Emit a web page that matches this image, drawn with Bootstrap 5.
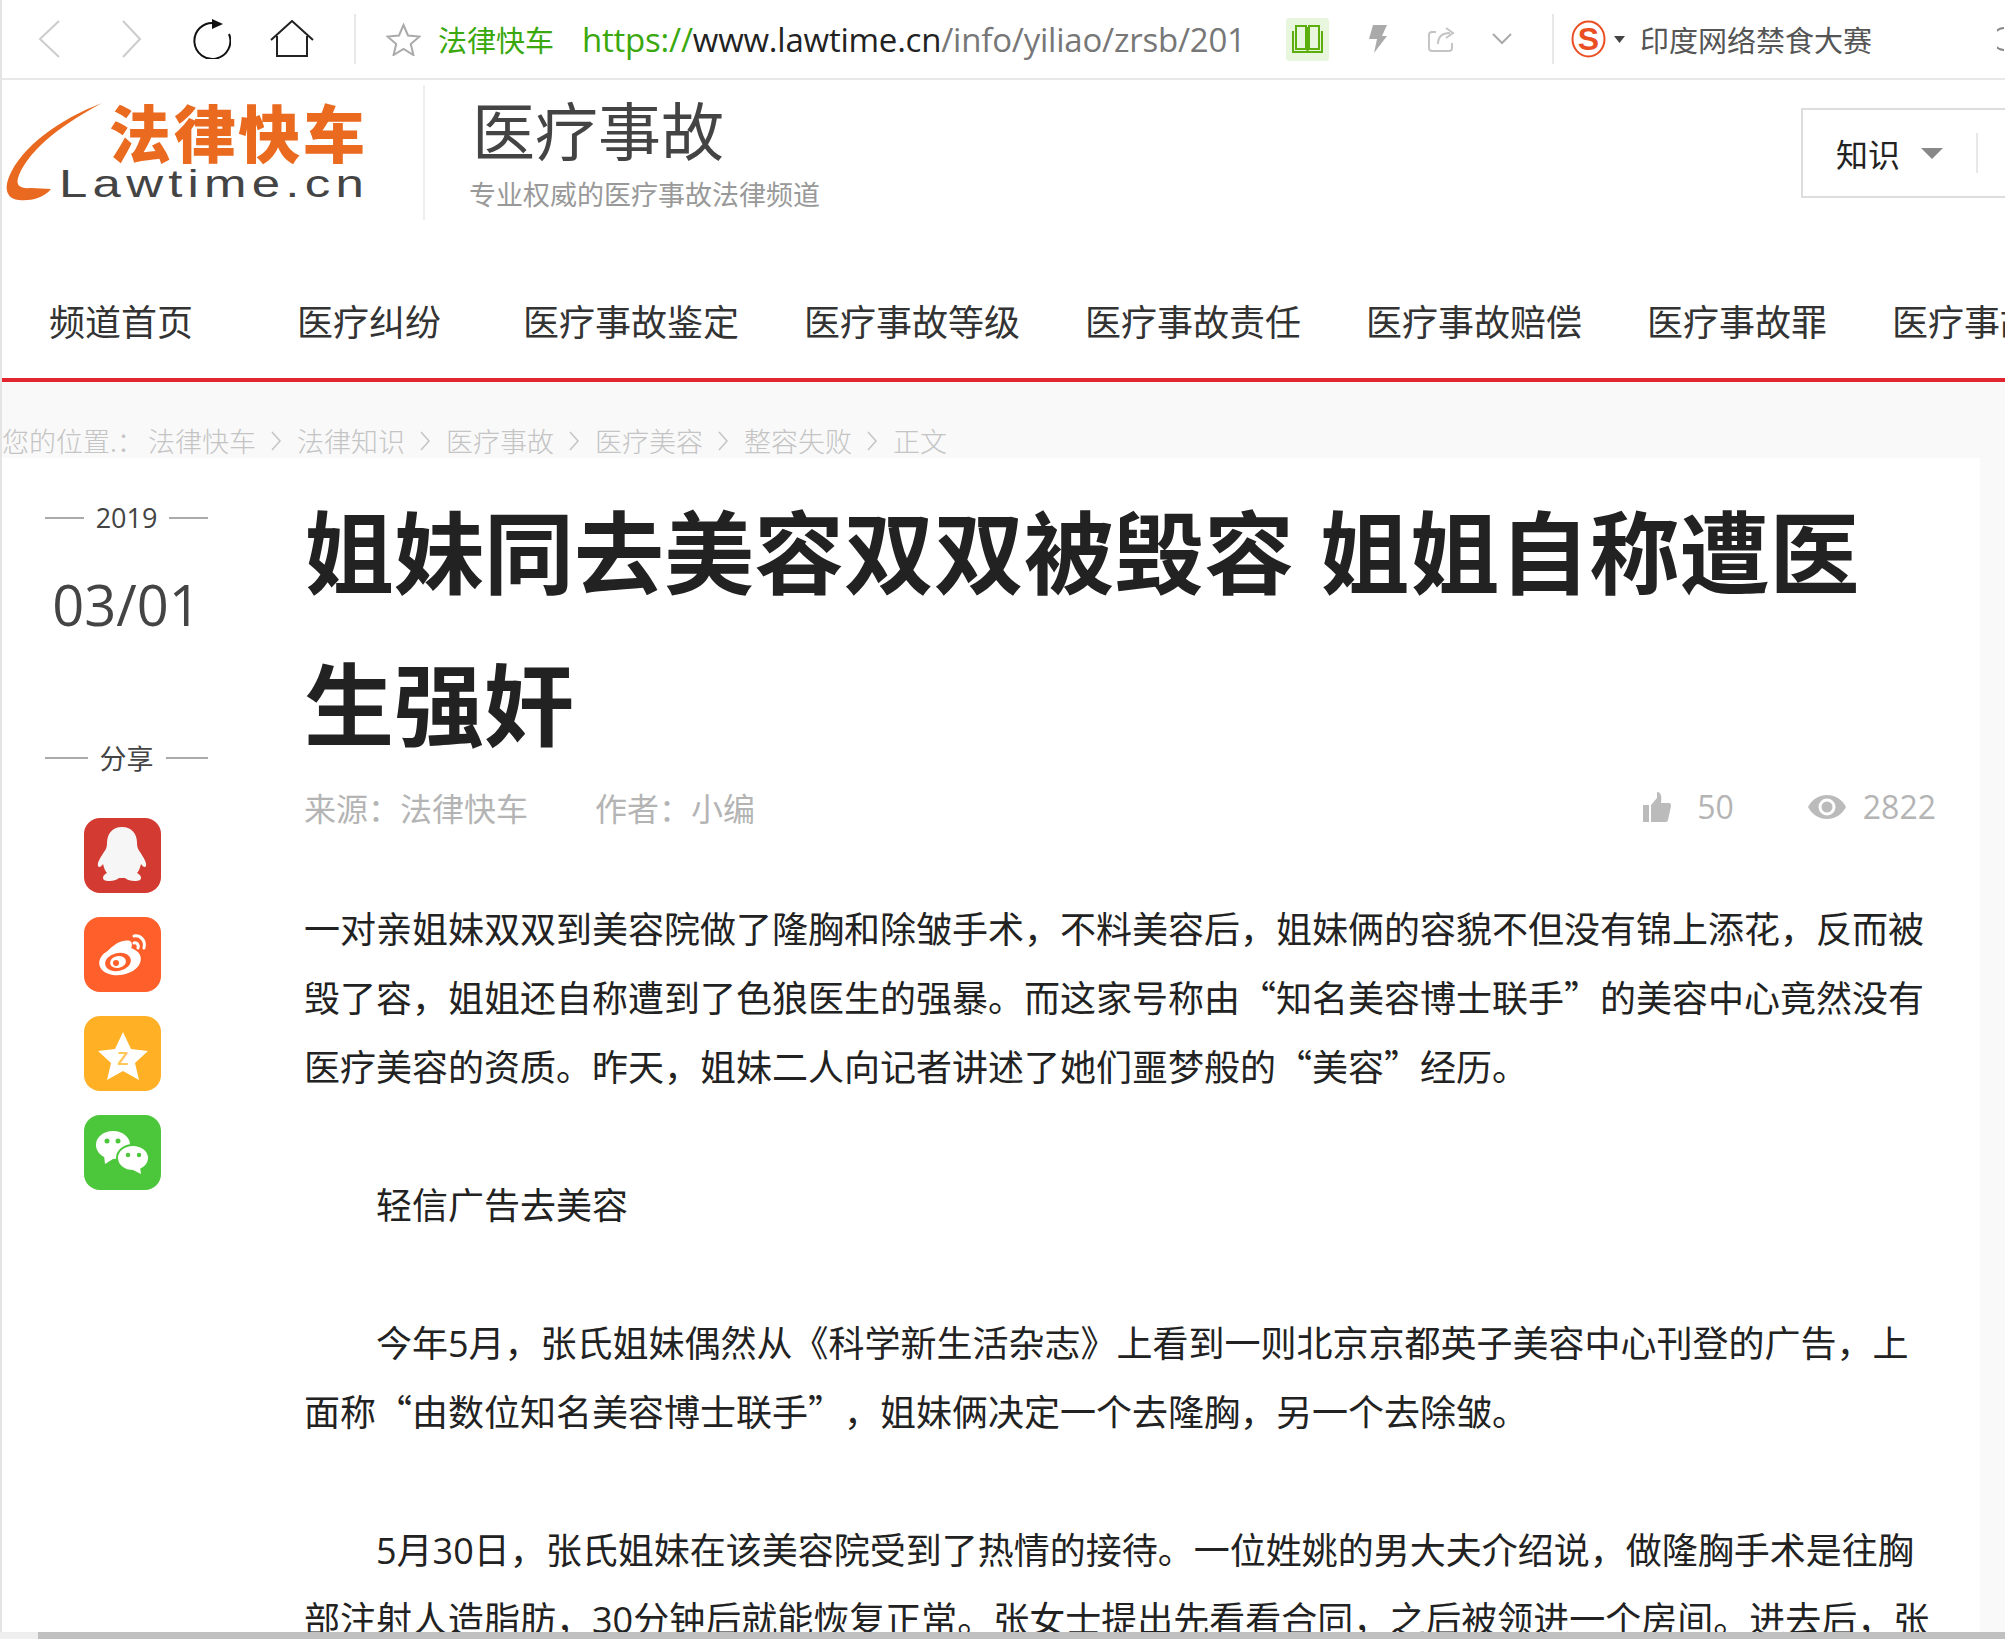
<!DOCTYPE html>
<html lang="zh-CN">
<head>
  <meta charset="UTF-8" />
  <title>姐妹同去美容双双被毁容 姐姐自称遭医生强奸</title>
  <link href="https://cdn.jsdelivr.net/npm/bootstrap@5.3.3/dist/css/bootstrap.min.css" rel="stylesheet">
  <style>
    html, body { height: 1639px; overflow: hidden; }
    body { font-family: "Noto Sans CJK SC", sans-serif; background: #fff; color: #222; border-left: 2px solid #e4e4e4; }
    .latin { font-family: "Open Sans", "Noto Sans CJK SC", sans-serif; }

    /* browser toolbar */
    .tool-bar { height: 80px; width: 2003px; border-bottom: 2px solid #e8e8e8; white-space: nowrap; overflow: hidden; }
    .tool-bar svg { flex: none; display: block; }
    .t-back { margin-left: 36px; }
    .t-fwd { margin-left: 60px; }
    .t-reload { margin-left: 51px; }
    .t-home { margin-left: 39px; }
    .t-sep { width: 2px; height: 50px; background: #e8e8e8; flex: none; }
    .t-sep1 { margin-left: 40px; }
    .t-star { margin-left: 30px; }
    .t-site { margin-left: 17px; width: 118px; font-size: 29px; color: #3aa80e; line-height: 1; flex: none; }
    .t-url { margin-left: 26px; width: 661px; font-size: 33px; letter-spacing: -0.22px; color: #777; flex: none; line-height: 1; }
    .t-url b { font-weight: 400; color: #3aa80e; }
    .t-url i { font-style: normal; color: #222; }
    .t-book { margin-left: 43px; width: 43px; height: 43px; background: #e9f6de; border-radius: 3px; flex: none; }
    .t-bolt { margin-left: 39px; }
    .t-share { margin-left: 40px; }
    .t-more { margin-left: 37px; }
    .t-sep2 { margin-left: 40px; }
    .t-sogou { margin-left: 17px; }
    .t-caret { margin-left: 8px; }
    .t-hot { margin-left: 15px; font-size: 29px; color: #555; line-height: 1; flex: none; }
    .t-edge { margin-left: 125px; }

    /* site header */
    .site-head { height: 302px; width: 2003px; overflow: hidden; }
    .brand-row { height: 218px; }
    .brand-logo { width: 421px; height: 140px; margin-top: 5px; flex: none; }
    .brand-div { width: 2px; height: 135px; background: #eee; flex: none; margin-top: 5px; }
    .brand-text { margin-left: 47px; padding-top: 8px; width: 1330px; flex: none; }
    .brand-name { font-size: 63px; line-height: 80px; color: #444; font-weight: 400; margin: 0; }
    .brand-sub { font-size: 27px; line-height: 40px; color: #999; margin: 6px 0 0 -3px; font-weight: 400; }
    .search-box { width: 400px; height: 90px; margin-top: 28px; margin-left: -1px; border: 2px solid #ddd; border-right: 0; flex: none; padding-left: 33px; }
    .search-kind { font-size: 32px; color: #222; line-height: 1; }
    .search-caret { width: 0; height: 0; border-left: 11px solid transparent; border-right: 11px solid transparent; border-top: 11px solid #888; margin-left: 21px; }
    .search-line { width: 2px; height: 40px; background: #e8e8e8; margin-left: 33px; }

    .chan-nav { height: 84px; border-bottom: 4px solid #e1262f; white-space: nowrap; padding-left: 47px; }
    .chan-nav a { font-size: 36px; line-height: 44px; color: #333; text-decoration: none; margin-right: 65px; font-weight: 400; flex: none; }
    .chan-nav a.n-first { margin-right: 104px; }
    .chan-nav a.n-second { margin-right: 82px; }

    .crumb-bar { height: 76px; background: #f9f9f9; padding-top: 42px; font-size: 27px; line-height: 34px; color: #c4c4c4; font-weight: 300; white-space: nowrap; }
    .crumb-here { width: 146px; flex: none; }
    .crumb-sep { width: 41px; flex: none; text-align: center; }
    .crumb-sep svg { display: block; margin: 0 auto; }

    /* article */
    .page-main { height: 1181px; background: #f9f9f9; }
    .page-inner { width: 1978px; background: #fff; height: 100%; overflow: hidden; }
    .side-col { width: 302px; flex: none; padding: 40px 0 0 43px; }
    .side-label { width: 163px; height: 40px; font-size: 27px; line-height: 40px; color: #444; }
    .side-label span.rule { flex: 1; height: 2px; background: #aaa; }
    .side-label .lbl { padding: 0 12px; }
    .side-date { width: 163px; height: 80px; margin-top: 26px; line-height: 80px; font-size: 56px; color: #444; text-align: center; }
    .share-head { margin-top: 94px; }
    .share-list { margin-top: 40px; margin-left: 39px; gap: 24px; }
    .share-btn { width: 77px; height: 75px; border-radius: 16px; display: block; }
    .s-qq { background: #d33a31; }
    .s-wb { background: #ff5f2a; }
    .s-qz { background: #ffb024; }
    .s-wx { background: #4cc63a; }

    .art-col { width: 1640px; flex: none; padding-top: 14px; }
    .art-title { font-size: 90px; line-height: 152px; font-weight: 700; color: #222; margin: 0; width: 1640px; word-spacing: 5px; }
    .art-meta { height: 52px; font-size: 32px; line-height: 52px; color: #b4b4b4; width: 1632px; margin-top: 5px; font-weight: 400; }
    .art-author { margin-left: 67px; }
    .art-like { margin-left: auto; }
    .art-stat { margin-left: 26px; }
    .art-eye { margin-left: 74px; }
    .art-views { margin-left: 17px; }
    .art-body { width: 1630px; font-size: 36px; line-height: 69px; color: #222; margin-top: 60px; font-weight: 400; text-spacing-trim: space-all; }
    .art-body p { margin: 0 0 69px; }
    .art-body p.ind { text-indent: 72px; }
    .art-body .latin { line-height: 1; }

    .h-scroll { position: fixed; left: 0; right: 0; bottom: 0; height: 7px; background: #eee; }
    .h-thumb { position: absolute; left: 38px; right: 0; top: 0; bottom: 0; background: #c0c0c0; }
  </style>
</head>
<body>

  <!-- browser toolbar -->
  <div class="tool-bar d-flex align-items-center">
    <svg class="t-back" width="23" height="38" viewBox="0 0 23 38"><path d="M21 1 2 19l19 18" fill="none" stroke="#ccc" stroke-width="2"/></svg>
    <svg class="t-fwd" width="21" height="38" viewBox="0 0 21 38"><path d="M2 1l17 18L2 37" fill="none" stroke="#ccc" stroke-width="2"/></svg>
    <svg class="t-reload" width="38" height="40" viewBox="0 0 38 40"><path d="M21 4A18 18 0 1 0 36 15" fill="none" stroke="#111" stroke-width="2"/><path d="M19 0l11 5-11 5z" fill="#111"/></svg>
    <svg class="t-home" width="44" height="38" viewBox="0 0 44 38"><path d="M1 20 22 1l21 19M7 16v20h30V16" fill="none" stroke="#222" stroke-width="2"/></svg>
    <div class="t-sep t-sep1"></div>
    <svg class="t-star" width="35" height="33" viewBox="0 0 35 33"><path d="M17.500 2l4.500 10.500 11.500 1-8.700 7.500 2.600 11-9.900-6-9.900 6 2.600-11L1.500 13.500l11.500-1z" fill="none" stroke="#aaa" stroke-width="2"/></svg>
    <div class="t-site">法律快车</div>
    <div class="t-url latin"><b>https://</b><i>www.lawtime.cn</i>/info/yiliao/zrsb/201</div>
    <div class="t-book d-flex align-items-center justify-content-center">
      <svg width="33" height="31" viewBox="0 0 33 31"><path d="M5 2h10v23H5zM18 2h10v23H18zM2 7v21h29V7M16.500 3v25" fill="none" stroke="#5cae0c" stroke-width="2"/></svg>
    </div>
    <svg class="t-bolt" width="20" height="30" viewBox="0 0 20 30"><path d="M5 1h14l-5 11h5L6 29l3-14H1z" fill="#aaa"/></svg>
    <svg class="t-share" width="27" height="27" viewBox="0 0 27 27"><path d="M8 6H4a3 3 0 0 0-3 3v13a3 3 0 0 0 3 3h17a3 3 0 0 0 3-3v-5M10 18c0-8 4-11 12-11" fill="none" stroke="#c4c4c4" stroke-width="2"/><path d="M18 2l7 5-7 5" fill="none" stroke="#c4c4c4" stroke-width="2"/></svg>
    <svg class="t-more" width="20" height="12" viewBox="0 0 20 12"><path d="M1 1l9 9 9-9" fill="none" stroke="#aaa" stroke-width="2"/></svg>
    <div class="t-sep t-sep2"></div>
    <svg class="t-sogou" width="35" height="38" viewBox="0 0 35 38"><ellipse cx="17.500" cy="19" rx="16" ry="17.500" fill="#fff" stroke="#ea4f23" stroke-width="2"/><text x="17.500" y="30" text-anchor="middle" font-family="Liberation Sans" font-weight="700" font-size="32" fill="#ea4f23">S</text></svg>
    <svg class="t-caret" width="11" height="7" viewBox="0 0 11 7"><path d="M0 0h11L5.500 7z" fill="#444"/></svg>
    <div class="t-hot">印度网络禁食大赛</div>
    <svg class="t-edge" width="8" height="24" viewBox="0 0 8 24"><path d="M7 1a11 11 0 0 0 0 22" fill="none" stroke="#888" stroke-width="2"/></svg>
  </div>

  <!-- site header -->
  <header class="site-head">
    <div class="brand-row d-flex">
      <svg class="brand-logo" viewBox="0 0 421 140">
        <path transform="translate(3 0)" d="M97 18C60 38 26 62 14 90 10 100 14 104 26 103L46 104C38 114 24 116 14 115 2 114-1 104 4 92 16 62 55 34 97 18Z" fill="#e8691f"/>
        <text x="107" y="73" font-family="Noto Sans CJK SC" font-weight="900" font-size="62" fill="#ea6a1f" textLength="256">法律快车</text>
        <text x="57" y="112" font-family="Liberation Sans" font-size="39" letter-spacing="4" fill="#444" textLength="310" lengthAdjust="spacingAndGlyphs">Lawtime.cn</text>
      </svg>
      <div class="brand-div"></div>
      <div class="brand-text">
        <h1 class="brand-name">医疗事故</h1>
        <p class="brand-sub">专业权威的医疗事故法律频道</p>
      </div>
      <div class="search-box d-flex align-items-center">
        <span class="search-kind">知识</span>
        <span class="search-caret"></span>
        <span class="search-line"></span>
      </div>
    </div>
    <nav class="chan-nav d-flex align-items-start">
      <a class="n-first" href="#">频道首页</a>
      <a class="n-second" href="#">医疗纠纷</a>
      <a href="#">医疗事故鉴定</a>
      <a href="#">医疗事故等级</a>
      <a href="#">医疗事故责任</a>
      <a href="#">医疗事故赔偿</a>
      <a href="#">医疗事故罪</a>
      <a href="#">医疗事故</a>
    </nav>
  </header>

  <div class="crumb-bar d-flex">
    <span class="crumb-here">您的位置.：</span><span>法律快车</span>
    <span class="crumb-sep d-flex align-items-center"><svg width="11" height="20" viewBox="0 0 11 20"><path d="M1 1l8 9-8 9" fill="none" stroke="#c4c4c4" stroke-width="1.500"/></svg></span>
    <span>法律知识</span>
    <span class="crumb-sep d-flex align-items-center"><svg width="11" height="20" viewBox="0 0 11 20"><path d="M1 1l8 9-8 9" fill="none" stroke="#c4c4c4" stroke-width="1.500"/></svg></span>
    <span>医疗事故</span>
    <span class="crumb-sep d-flex align-items-center"><svg width="11" height="20" viewBox="0 0 11 20"><path d="M1 1l8 9-8 9" fill="none" stroke="#c4c4c4" stroke-width="1.500"/></svg></span>
    <span>医疗美容</span>
    <span class="crumb-sep d-flex align-items-center"><svg width="11" height="20" viewBox="0 0 11 20"><path d="M1 1l8 9-8 9" fill="none" stroke="#c4c4c4" stroke-width="1.500"/></svg></span>
    <span>整容失败</span>
    <span class="crumb-sep d-flex align-items-center"><svg width="11" height="20" viewBox="0 0 11 20"><path d="M1 1l8 9-8 9" fill="none" stroke="#c4c4c4" stroke-width="1.500"/></svg></span>
    <span>正文</span>
  </div>

  <!-- article -->
  <main class="page-main">
    <div class="page-inner d-flex">
      <aside class="side-col">
        <div class="side-label d-flex align-items-center"><span class="rule"></span><span class="lbl latin">2019</span><span class="rule"></span></div>
        <div class="side-date latin">03/01</div>
        <div class="side-label share-head d-flex align-items-center"><span class="rule"></span><span class="lbl">分享</span><span class="rule"></span></div>
        <div class="share-list d-flex flex-column">
          <a class="share-btn s-qq" href="#"><svg width="77" height="75" viewBox="0 0 77 75"><path d="M38 9C28 9 23 16 23 25 23 29 22 31 20 34 17 39 13 44 14 48 15 50 17 49 19 46 20 50 21 53 23 55 19 57 18 60 20 62 24 64 32 63 35 60H41C44 63 52 64 56 62 58 60 57 57 53 55 55 53 56 50 57 46 59 49 61 50 62 48 63 44 59 39 56 34 54 31 53 29 53 25 53 16 48 9 38 9Z" fill="#f6f6f6"/></svg></a>
          <a class="share-btn s-wb" href="#"><svg width="77" height="75" viewBox="0 0 77 75"><ellipse cx="36" cy="44" rx="21" ry="14" transform="rotate(-10 36 44)" fill="#fff"/><path d="M22 36C30 26 40 22 46 24 49 26 48 30 46 34z" fill="#fff"/><ellipse cx="34" cy="45" rx="13" ry="9" transform="rotate(-12 34 45)" fill="#ff5f2a"/><ellipse cx="34" cy="45" rx="8" ry="6" transform="rotate(-12 34 45)" fill="#fff"/><circle cx="32" cy="46" r="3" fill="#ff5f2a"/><path d="M50 19c6-1 12 4 10 12M50 26c3-1 5 2 4 5" fill="none" stroke="#fff" stroke-width="3" stroke-linecap="round"/></svg></a>
          <a class="share-btn s-qz" href="#"><svg width="77" height="75" viewBox="0 0 77 75"><path d="M39 16l8 17 17 2-13 12 4 17-16-9-16 9 4-17-13-12 17-2z" fill="#fff"/><text x="39" y="49" text-anchor="middle" font-family="Liberation Sans" font-weight="700" font-size="18" fill="#ffc65a">Z</text></svg></a>
          <a class="share-btn s-wx" href="#"><svg width="77" height="75" viewBox="0 0 77 75"><ellipse cx="29" cy="30" rx="17" ry="14" fill="#fff"/><path d="M20 40l1 9 8-5z" fill="#fff"/><ellipse cx="49" cy="43" rx="16" ry="13" fill="#fff" stroke="#4cc63a" stroke-width="2"/><path d="M56 52l1 7-8-4z" fill="#fff"/><circle cx="23" cy="26" r="2.500" fill="#4cc63a"/><circle cx="34" cy="26" r="2.500" fill="#4cc63a"/><circle cx="44" cy="40" r="2.200" fill="#4cc63a"/><circle cx="55" cy="40" r="2.200" fill="#4cc63a"/></svg></a>
        </div>
      </aside>
      <article class="art-col">
        <h2 class="art-title">姐妹同去美容双双被毁容 姐姐自称遭医生强奸</h2>
        <div class="art-meta d-flex align-items-center">
          <span>来源：法律快车</span>
          <span class="art-author">作者：小编</span>
          <svg class="art-like" width="28" height="30" viewBox="0 0 28 30"><path d="M0 13h6v17H0zM8 13l6-7V0c4 0 5 4 4 11h8c2 0 2 2 2 3l-3 14c-.5 2-2 2-3 2H8z" fill="#bbb"/></svg>
          <span class="art-stat latin">50</span>
          <svg class="art-eye" width="38" height="24" viewBox="0 0 38 24"><path d="M0 12C8-4 30-4 38 12 30 28 8 28 0 12z" fill="#bbb"/><circle cx="19" cy="12" r="8.500" fill="#fff"/><circle cx="19" cy="12" r="5.500" fill="#bbb"/></svg>
          <span class="art-views latin">2822</span>
        </div>
        <div class="art-body">
          <p>一对亲姐妹双双到美容院做了隆胸和除皱手术，不料美容后，姐妹俩的容貌不但没有锦上添花，反而被毁了容，姐姐还自称遭到了色狼医生的强暴。而这家号称由“知名美容博士联手”的美容中心竟然没有医疗美容的资质。昨天，姐妹二人向记者讲述了她们噩梦般的“美容”经历。</p>
          <p class="ind">轻信广告去美容</p>
          <p class="ind">今年<span class="latin">5</span>月，张氏姐妹偶然从《科学新生活杂志》上看到一则北京京都英子美容中心刊登的广告，上面称“由数位知名美容博士联手”&zwnj;，姐妹俩决定一个去隆胸，另一个去除皱。</p>
          <p class="ind"><span class="latin">5</span>月<span class="latin">30</span>日，张氏姐妹在该美容院受到了热情的接待。一位姓姚的男大夫介绍说，做隆胸手术是往胸部注射人造脂肪，<span class="latin">30</span>分钟后就能恢复正常。张女士提出先看看合同，之后被领进一个房间。进去后，张</p>
        </div>
      </article>
    </div>
  </main>

  <div class="h-scroll"><div class="h-thumb"></div></div>

  <script src="https://cdn.jsdelivr.net/npm/bootstrap@5.3.3/dist/js/bootstrap.bundle.min.js"></script>
</body>
</html>
